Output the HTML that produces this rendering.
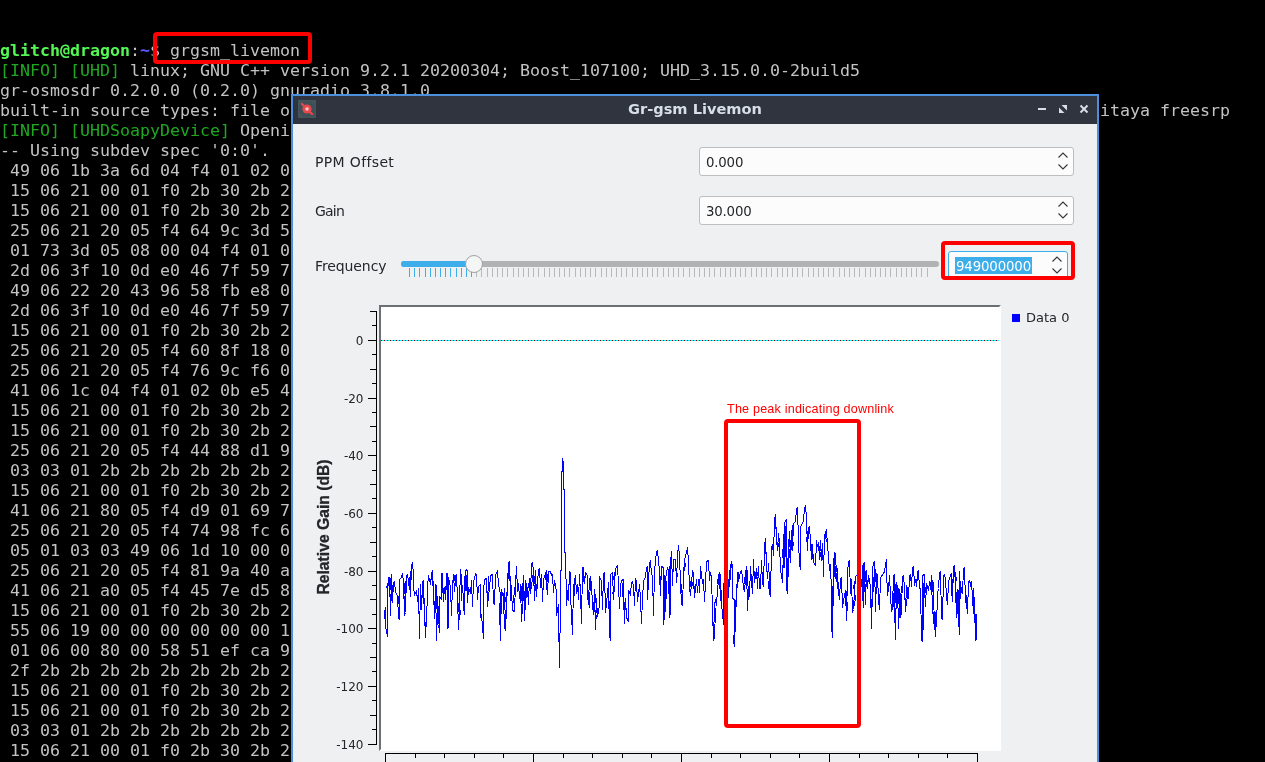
<!DOCTYPE html>
<html><head><meta charset="utf-8"><title>Gr-gsm Livemon</title>
<style>
html,body{margin:0;padding:0;background:#000;}
body{width:1265px;height:762px;overflow:hidden;position:relative;font-family:"DejaVu Sans","Liberation Sans",sans-serif;}
#term{will-change:transform;position:absolute;left:0;top:41px;width:1265px;color:#c3c3c3;font-family:"DejaVu Sans Mono","Liberation Mono",monospace;font-size:16.61px;line-height:20px;white-space:pre;}
.ln{height:20px;overflow:hidden}
.g{color:#1fa81f}
.pg{color:#54f754;font-weight:bold}
.pb{color:#5c5cff;font-weight:bold}
.redbox{position:absolute;border:4px solid #ff0000;border-radius:4px;box-sizing:border-box}
#win{position:absolute;left:291px;top:94px;width:808px;height:680px;box-sizing:border-box;border:2px solid #4e8fdc;background:#eff0f1;}
#tb{position:absolute;left:0;top:0;width:804px;height:28px;background:#2f343f;}
#tb .title{position:absolute;left:0;right:0;top:-1px;height:27px;line-height:27px;text-align:center;color:#d8dee8;font-weight:bold;font-size:14.6px;font-family:"DejaVu Sans","Liberation Sans",sans-serif;}
#ico{position:absolute;left:5px;top:4px;width:18px;height:18px}
.lbl{position:absolute;left:22px;color:#232629;font-size:14px;line-height:20px;font-family:"DejaVu Sans","Liberation Sans",sans-serif;}
.spin{position:absolute;box-sizing:border-box;border:1px solid #bcbebf;border-radius:3px;background:#fcfcfc;color:#232629;font-size:13.33px;}
.spin span{position:absolute;left:6px;top:1px;line-height:27px;letter-spacing:-0.2px}
#groove{position:absolute;left:108px;top:165px;width:538px;height:6px;border-radius:3px;background:#b1b2b3}
#fill{position:absolute;left:108px;top:165px;width:74px;height:6px;border-radius:3px;background:#3daee9}
#handle{position:absolute;left:172px;top:159px;width:18px;height:18px;box-sizing:border-box;border:1px solid #9fa1a3;border-radius:50%;background:#f4f5f5}
#ticks i{position:absolute;top:172px;width:1px;height:9px;display:block}
.tl{font-family:"DejaVu Sans","Liberation Sans",sans-serif;font-size:12px;fill:#232629}
#plot{position:absolute;left:0;top:0;width:1265px;height:762px;}
#canvas{position:absolute;left:379px;top:305px;width:622px;height:446px;background:#fff;box-sizing:border-box;border-top:2px solid #6c7075;border-left:2px solid #6c7075;border-right:2px solid #fff;border-bottom:2px solid #fff;}
#ytitle{position:absolute;left:324px;top:527px;width:0;height:0;}
#ytitle span{position:absolute;white-space:nowrap;transform:translate(-50%,-50%) rotate(-90deg);font-family:"Liberation Sans",sans-serif;font-weight:bold;font-size:15.7px;color:#232629;-webkit-text-stroke:0.3px #232629;}
#legend{position:absolute;left:1012px;top:314px;width:8px;height:8px;background:#0000ff}
#legtxt{position:absolute;left:1026px;top:308px;font-size:13px;line-height:20px;color:#232629;}
#anno{position:absolute;left:727px;top:402px;font-family:"Liberation Sans",sans-serif;font-size:12.6px;letter-spacing:0.19px;line-height:14px;color:#ff0000;white-space:nowrap}
</style></head><body>
<div id="root" style="position:absolute;left:0;top:0;width:1265px;height:762px;will-change:transform">
<div id="term"><div class="ln"><span class="pg">glitch@dragon</span>:<span class="pb">~</span>$ grgsm_livemon</div><div class="ln"><span class="g">[INFO] [UHD]</span> linux; GNU C++ version 9.2.1 20200304; Boost_107100; UHD_3.15.0.0-2build5</div><div class="ln">gr-osmosdr 0.2.0.0 (0.2.0) gnuradio 3.8.1.0</div><div class="ln">built-in source types: file osmosdr fcd rtl rtl_tcp uhd miri hackrf bladerf rfspace airspy airspyhf soapy redpitaya freesrp</div><div class="ln"><span class="g">[INFO] [UHDSoapyDevice]</span> Opening device</div><div class="ln">-- Using subdev spec '0:0'.</div><div class="ln"> 49 06 1b 3a 6d 04 f4 01 02 0b 2b 2b 2b</div><div class="ln"> 15 06 21 00 01 f0 2b 30 2b 2b 2b 2b 2b</div><div class="ln"> 15 06 21 00 01 f0 2b 30 2b 2b 2b 2b 2b</div><div class="ln"> 25 06 21 20 05 f4 64 9c 3d 5b 2b 2b 2b</div><div class="ln"> 01 73 3d 05 08 00 04 f4 01 0b 2b 2b 2b</div><div class="ln"> 2d 06 3f 10 0d e0 46 7f 59 7b 2b 2b 2b</div><div class="ln"> 49 06 22 20 43 96 58 fb e8 0b 2b 2b 2b</div><div class="ln"> 2d 06 3f 10 0d e0 46 7f 59 7b 2b 2b 2b</div><div class="ln"> 15 06 21 00 01 f0 2b 30 2b 2b 2b 2b 2b</div><div class="ln"> 25 06 21 20 05 f4 60 8f 18 0b 2b 2b 2b</div><div class="ln"> 25 06 21 20 05 f4 76 9c f6 0b 2b 2b 2b</div><div class="ln"> 41 06 1c 04 f4 01 02 0b e5 4b 2b 2b 2b</div><div class="ln"> 15 06 21 00 01 f0 2b 30 2b 2b 2b 2b 2b</div><div class="ln"> 15 06 21 00 01 f0 2b 30 2b 2b 2b 2b 2b</div><div class="ln"> 25 06 21 20 05 f4 44 88 d1 9b 2b 2b 2b</div><div class="ln"> 03 03 01 2b 2b 2b 2b 2b 2b 2b 2b 2b 2b</div><div class="ln"> 15 06 21 00 01 f0 2b 30 2b 2b 2b 2b 2b</div><div class="ln"> 41 06 21 80 05 f4 d9 01 69 7b 2b 2b 2b</div><div class="ln"> 25 06 21 20 05 f4 74 98 fc 6b 2b 2b 2b</div><div class="ln"> 05 01 03 03 49 06 1d 10 00 0b 2b 2b 2b</div><div class="ln"> 25 06 21 20 05 f4 81 9a 40 ab 2b 2b 2b</div><div class="ln"> 41 06 21 a0 05 f4 45 7e d5 8b 2b 2b 2b</div><div class="ln"> 15 06 21 00 01 f0 2b 30 2b 2b 2b 2b 2b</div><div class="ln"> 55 06 19 00 00 00 00 00 00 1b 2b 2b 2b</div><div class="ln"> 01 06 00 80 00 58 51 ef ca 9b 2b 2b 2b</div><div class="ln"> 2f 2b 2b 2b 2b 2b 2b 2b 2b 2b 2b 2b 2b</div><div class="ln"> 15 06 21 00 01 f0 2b 30 2b 2b 2b 2b 2b</div><div class="ln"> 15 06 21 00 01 f0 2b 30 2b 2b 2b 2b 2b</div><div class="ln"> 03 03 01 2b 2b 2b 2b 2b 2b 2b 2b 2b 2b</div><div class="ln"> 15 06 21 00 01 f0 2b 30 2b 2b 2b 2b 2b</div></div>
<div class="redbox" style="left:153px;top:32px;width:159px;height:32px"></div>

<div id="win">
 <div id="tb">
  <svg id="ico" viewBox="0 0 18 18"><rect width="18" height="18" fill="#44545c"/><circle cx="9" cy="9" r="8" fill="#3e4f56"/><path d="M4 4 L14 14" stroke="#e8484c" stroke-width="2.3" stroke-linecap="round"/><circle cx="9" cy="9" r="4.6" fill="#e8484c"/><circle cx="9" cy="9" r="1.8" fill="#f7c9cc"/></svg>
  <div class="title">Gr-gsm Livemon</div>
  <svg style="position:absolute;left:738px;top:6px" width="60" height="16" viewBox="1031 102 60 16">
   <rect x="1038" y="108" width="8" height="2" fill="#d8dee8"/>
   <path d="M1061.5 105 H1067 V110.5 Z M1059 107.5 V113 H1064.5 Z" fill="#d8dee8"/>
   <path d="M1080.5 105.5 L1087.5 112.5 M1087.5 105.5 L1080.5 112.5" stroke="#d8dee8" stroke-width="2" fill="none"/>
  </svg>
 </div>
 <div class="lbl" style="top:56px;letter-spacing:0.35px">PPM Offset</div>
 <div class="lbl" style="top:105px;letter-spacing:-0.8px">Gain</div>
 <div class="lbl" style="top:160px;letter-spacing:-0.1px">Frequency</div>
 <div class="spin" style="left:406px;top:51px;width:375px;height:29px"><span>0.000</span>
  <svg style="position:absolute;right:4px;top:4px" width="12" height="20" viewBox="1057 152 12 20"><path d="M1058.5 157.5 L1063 153 L1067.5 157.5 M1058.5 164.5 L1063 169 L1067.5 164.5" fill="none" stroke="#31363b" stroke-width="1.1"/></svg>
 </div>
 <div class="spin" style="left:406px;top:100px;width:375px;height:29px"><span>30.000</span>
  <svg style="position:absolute;right:4px;top:4px" width="12" height="20" viewBox="1057 152 12 20"><path d="M1058.5 157.5 L1063 153 L1067.5 157.5 M1058.5 164.5 L1063 169 L1067.5 164.5" fill="none" stroke="#31363b" stroke-width="1.1"/></svg>
 </div>
 <div id="groove"></div><div id="fill"></div>
 <div id="ticks"><i style="left:116px;background:#3daee9"></i><i style="left:121px;background:#3daee9"></i><i style="left:126px;background:#3daee9"></i><i style="left:132px;background:#3daee9"></i><i style="left:137px;background:#3daee9"></i><i style="left:142px;background:#3daee9"></i><i style="left:147px;background:#3daee9"></i><i style="left:152px;background:#3daee9"></i><i style="left:157px;background:#3daee9"></i><i style="left:163px;background:#3daee9"></i><i style="left:168px;background:#3daee9"></i><i style="left:173px;background:#3daee9"></i><i style="left:178px;background:#3daee9"></i><i style="left:183px;background:#b7b8b9"></i><i style="left:188px;background:#b7b8b9"></i><i style="left:194px;background:#b7b8b9"></i><i style="left:199px;background:#b7b8b9"></i><i style="left:204px;background:#b7b8b9"></i><i style="left:209px;background:#b7b8b9"></i><i style="left:214px;background:#b7b8b9"></i><i style="left:220px;background:#b7b8b9"></i><i style="left:225px;background:#b7b8b9"></i><i style="left:230px;background:#b7b8b9"></i><i style="left:235px;background:#b7b8b9"></i><i style="left:240px;background:#b7b8b9"></i><i style="left:245px;background:#b7b8b9"></i><i style="left:251px;background:#b7b8b9"></i><i style="left:256px;background:#b7b8b9"></i><i style="left:261px;background:#b7b8b9"></i><i style="left:266px;background:#b7b8b9"></i><i style="left:271px;background:#b7b8b9"></i><i style="left:276px;background:#b7b8b9"></i><i style="left:282px;background:#b7b8b9"></i><i style="left:287px;background:#b7b8b9"></i><i style="left:292px;background:#b7b8b9"></i><i style="left:297px;background:#b7b8b9"></i><i style="left:302px;background:#b7b8b9"></i><i style="left:308px;background:#b7b8b9"></i><i style="left:313px;background:#b7b8b9"></i><i style="left:318px;background:#b7b8b9"></i><i style="left:323px;background:#b7b8b9"></i><i style="left:328px;background:#b7b8b9"></i><i style="left:333px;background:#b7b8b9"></i><i style="left:339px;background:#b7b8b9"></i><i style="left:344px;background:#b7b8b9"></i><i style="left:349px;background:#b7b8b9"></i><i style="left:354px;background:#b7b8b9"></i><i style="left:359px;background:#b7b8b9"></i><i style="left:364px;background:#b7b8b9"></i><i style="left:370px;background:#b7b8b9"></i><i style="left:375px;background:#b7b8b9"></i><i style="left:380px;background:#b7b8b9"></i><i style="left:385px;background:#b7b8b9"></i><i style="left:390px;background:#b7b8b9"></i><i style="left:396px;background:#b7b8b9"></i><i style="left:401px;background:#b7b8b9"></i><i style="left:406px;background:#b7b8b9"></i><i style="left:411px;background:#b7b8b9"></i><i style="left:416px;background:#b7b8b9"></i><i style="left:421px;background:#b7b8b9"></i><i style="left:427px;background:#b7b8b9"></i><i style="left:432px;background:#b7b8b9"></i><i style="left:437px;background:#b7b8b9"></i><i style="left:442px;background:#b7b8b9"></i><i style="left:447px;background:#b7b8b9"></i><i style="left:452px;background:#b7b8b9"></i><i style="left:458px;background:#b7b8b9"></i><i style="left:463px;background:#b7b8b9"></i><i style="left:468px;background:#b7b8b9"></i><i style="left:473px;background:#b7b8b9"></i><i style="left:478px;background:#b7b8b9"></i><i style="left:484px;background:#b7b8b9"></i><i style="left:489px;background:#b7b8b9"></i><i style="left:494px;background:#b7b8b9"></i><i style="left:499px;background:#b7b8b9"></i><i style="left:504px;background:#b7b8b9"></i><i style="left:509px;background:#b7b8b9"></i><i style="left:515px;background:#b7b8b9"></i><i style="left:520px;background:#b7b8b9"></i><i style="left:525px;background:#b7b8b9"></i><i style="left:530px;background:#b7b8b9"></i><i style="left:535px;background:#b7b8b9"></i><i style="left:540px;background:#b7b8b9"></i><i style="left:546px;background:#b7b8b9"></i><i style="left:551px;background:#b7b8b9"></i><i style="left:556px;background:#b7b8b9"></i><i style="left:561px;background:#b7b8b9"></i><i style="left:566px;background:#b7b8b9"></i><i style="left:572px;background:#b7b8b9"></i><i style="left:577px;background:#b7b8b9"></i><i style="left:582px;background:#b7b8b9"></i><i style="left:587px;background:#b7b8b9"></i><i style="left:592px;background:#b7b8b9"></i><i style="left:597px;background:#b7b8b9"></i><i style="left:603px;background:#b7b8b9"></i><i style="left:608px;background:#b7b8b9"></i><i style="left:613px;background:#b7b8b9"></i><i style="left:618px;background:#b7b8b9"></i><i style="left:623px;background:#b7b8b9"></i><i style="left:628px;background:#b7b8b9"></i><i style="left:634px;background:#b7b8b9"></i></div>
 <div id="handle"></div>
 <div class="spin" style="left:655px;top:155px;width:120px;height:29px;border-color:#3daee9"><span style="left:6px;top:5px;height:17px;line-height:19px;background:#3daee9;color:#fff;padding:0 1px;letter-spacing:-0.15px">949000000</span>
  <svg style="position:absolute;right:4px;top:4px" width="12" height="20" viewBox="1057 152 12 20"><path d="M1058.5 157.5 L1063 153 L1067.5 157.5 M1058.5 164.5 L1063 169 L1067.5 164.5" fill="none" stroke="#31363b" stroke-width="1.1"/></svg>
 </div>
</div>
<div class="redbox" style="left:941px;top:241px;width:134px;height:39px"></div>

<div id="canvas"></div>
<div style="position:absolute;left:381px;top:340px;width:618px;height:1px;background:repeating-linear-gradient(90deg,#800000 0,#800000 1px,#00ffff 1px,#00ffff 3px)"></div>
<svg id="plot" viewBox="0 0 1265 762">
<path d="M376.5 311 V745" stroke="#000" stroke-width="1" fill="none"/>
<path d="M370 311.5 H377" stroke="#000" stroke-width="1"/>
<path d="M372 325.5 H377" stroke="#000" stroke-width="1"/>
<path d="M368 340.5 H377" stroke="#000" stroke-width="1"/>
<text x="363.5" y="345.0" text-anchor="end" class="tl">0</text>
<path d="M372 354.5 H377" stroke="#000" stroke-width="1"/>
<path d="M370 369.5 H377" stroke="#000" stroke-width="1"/>
<path d="M372 383.5 H377" stroke="#000" stroke-width="1"/>
<path d="M368 398.5 H377" stroke="#000" stroke-width="1"/>
<text x="363.5" y="403.0" text-anchor="end" class="tl">-20</text>
<path d="M372 412.5 H377" stroke="#000" stroke-width="1"/>
<path d="M370 426.5 H377" stroke="#000" stroke-width="1"/>
<path d="M372 441.5 H377" stroke="#000" stroke-width="1"/>
<path d="M368 455.5 H377" stroke="#000" stroke-width="1"/>
<text x="363.5" y="460.0" text-anchor="end" class="tl">-40</text>
<path d="M372 470.5 H377" stroke="#000" stroke-width="1"/>
<path d="M370 484.5 H377" stroke="#000" stroke-width="1"/>
<path d="M372 498.5 H377" stroke="#000" stroke-width="1"/>
<path d="M368 513.5 H377" stroke="#000" stroke-width="1"/>
<text x="363.5" y="518.0" text-anchor="end" class="tl">-60</text>
<path d="M372 527.5 H377" stroke="#000" stroke-width="1"/>
<path d="M370 542.5 H377" stroke="#000" stroke-width="1"/>
<path d="M372 556.5 H377" stroke="#000" stroke-width="1"/>
<path d="M368 571.5 H377" stroke="#000" stroke-width="1"/>
<text x="363.5" y="576.0" text-anchor="end" class="tl">-80</text>
<path d="M372 585.5 H377" stroke="#000" stroke-width="1"/>
<path d="M370 599.5 H377" stroke="#000" stroke-width="1"/>
<path d="M372 614.5 H377" stroke="#000" stroke-width="1"/>
<path d="M368 628.5 H377" stroke="#000" stroke-width="1"/>
<text x="363.5" y="633.0" text-anchor="end" class="tl">-100</text>
<path d="M372 643.5 H377" stroke="#000" stroke-width="1"/>
<path d="M370 657.5 H377" stroke="#000" stroke-width="1"/>
<path d="M372 671.5 H377" stroke="#000" stroke-width="1"/>
<path d="M368 686.5 H377" stroke="#000" stroke-width="1"/>
<text x="363.5" y="691.0" text-anchor="end" class="tl">-120</text>
<path d="M372 700.5 H377" stroke="#000" stroke-width="1"/>
<path d="M370 715.5 H377" stroke="#000" stroke-width="1"/>
<path d="M372 729.5 H377" stroke="#000" stroke-width="1"/>
<path d="M368 744.5 H377" stroke="#000" stroke-width="1"/>
<text x="363.5" y="749.0" text-anchor="end" class="tl">-140</text>
<path d="M385 753.5 H978" stroke="#000" stroke-width="1" fill="none"/>
<path d="M385.5 753 V762" stroke="#000" stroke-width="1"/>
<path d="M415.5 753 V758" stroke="#000" stroke-width="1"/>
<path d="M444.5 753 V758" stroke="#000" stroke-width="1"/>
<path d="M474.5 753 V758" stroke="#000" stroke-width="1"/>
<path d="M503.5 753 V758" stroke="#000" stroke-width="1"/>
<path d="M533.5 753 V762" stroke="#000" stroke-width="1"/>
<path d="M563.5 753 V758" stroke="#000" stroke-width="1"/>
<path d="M592.5 753 V758" stroke="#000" stroke-width="1"/>
<path d="M622.5 753 V758" stroke="#000" stroke-width="1"/>
<path d="M651.5 753 V758" stroke="#000" stroke-width="1"/>
<path d="M681.5 753 V762" stroke="#000" stroke-width="1"/>
<path d="M711.5 753 V758" stroke="#000" stroke-width="1"/>
<path d="M740.5 753 V758" stroke="#000" stroke-width="1"/>
<path d="M770.5 753 V758" stroke="#000" stroke-width="1"/>
<path d="M799.5 753 V758" stroke="#000" stroke-width="1"/>
<path d="M829.5 753 V762" stroke="#000" stroke-width="1"/>
<path d="M859.5 753 V758" stroke="#000" stroke-width="1"/>
<path d="M888.5 753 V758" stroke="#000" stroke-width="1"/>
<path d="M918.5 753 V758" stroke="#000" stroke-width="1"/>
<path d="M947.5 753 V758" stroke="#000" stroke-width="1"/>
<path d="M977.5 753 V762" stroke="#000" stroke-width="1"/>
<polyline points="385.5,606.5 385.5,626.5 387.5,636.5 387.5,595.5 388.5,577.5 389.5,577.5 390.5,615.5 391.5,574.5 392.5,602.5 393.5,582.5 394.5,581.5 395.5,591.5 397.5,596.5 398.5,617.5 399.5,619.5 399.5,579.5 401.5,577.5 402.5,573.5 403.5,581.5 404.5,615.5 405.5,612.5 406.5,575.5 407.5,574.5 408.5,580.5 409.5,577.5 410.5,596.5 411.5,565.5 412.5,563.5 413.5,573.5 413.5,585.5 414.5,595.5 416.5,590.5 417.5,601.5 418.5,588.5 419.5,638.5 420.5,584.5 421.5,609.5 422.5,581.5 423.5,580.5 424.5,614.5 425.5,637.5 426.5,606.5 426.5,626.5 427.5,587.5 428.5,575.5 430.5,584.5 431.5,573.5 432.5,571.5 433.5,590.5 434.5,618.5 435.5,584.5 436.5,640.5 437.5,596.5 438.5,615.5 439.5,632.5 439.5,596.5 441.5,599.5 441.5,573.5 442.5,573.5 443.5,601.5 444.5,587.5 445.5,599.5 446.5,573.5 447.5,573.5 447.5,628.5 448.5,626.5 448.5,577.5 450.5,587.5 451.5,615.5 452.5,585.5 453.5,574.5 454.5,591.5 455.5,575.5 456.5,574.5 457.5,598.5 458.5,629.5 459.5,602.5 460.5,569.5 461.5,577.5 461.5,600.5 462.5,585.5 464.5,614.5 465.5,570.5 466.5,569.5 467.5,571.5 467.5,602.5 468.5,587.5 470.5,593.5 471.5,580.5 472.5,606.5 473.5,582.5 475.5,573.5 476.5,574.5 477.5,599.5 478.5,586.5 480.5,584.5 480.5,617.5 481.5,615.5 483.5,638.5 483.5,591.5 484.5,579.5 486.5,578.5 487.5,606.5 488.5,576.5 489.5,589.5 490.5,575.5 492.5,574.5 493.5,603.5 494.5,604.5 495.5,574.5 496.5,573.5 497.5,571.5 498.5,584.5 500.5,594.5 500.5,640.5 501.5,589.5 503.5,598.5 504.5,588.5 505.5,630.5 506.5,608.5 507.5,584.5 508.5,562.5 509.5,561.5 510.5,600.5 511.5,591.5 512.5,610.5 514.5,611.5 515.5,584.5 516.5,566.5 517.5,591.5 518.5,583.5 519.5,598.5 520.5,584.5 521.5,621.5 522.5,591.5 523.5,575.5 524.5,620.5 525.5,580.5 527.5,589.5 528.5,604.5 529.5,578.5 530.5,593.5 531.5,563.5 532.5,562.5 533.5,571.5 534.5,600.5 535.5,570.5 536.5,596.5 538.5,569.5 539.5,568.5 540.5,587.5 541.5,574.5 542.5,601.5 543.5,579.5 544.5,576.5 546.5,570.5 547.5,594.5 548.5,571.5 550.5,571.5 551.5,575.5 552.5,574.5 553.5,592.5 554.5,580.5 556.5,591.5 556.5,615.5 558.5,604.5 558.5,615.5 559.5,667.5 560.5,600.5 560.5,570.5 561.5,570.5 561.5,471.5 562.5,471.5 562.5,458.5 563.5,463.5 563.5,489.5 564.5,489.5 564.5,552.5 565.5,552.5 565.5,571.5 566.5,585.5 566.5,605.5 568.5,584.5 568.5,600.5 569.5,571.5 570.5,573.5 570.5,594.5 572.5,634.5 573.5,584.5 574.5,595.5 575.5,575.5 576.5,593.5 577.5,584.5 578.5,599.5 579.5,574.5 580.5,593.5 581.5,623.5 582.5,568.5 583.5,567.5 584.5,583.5 585.5,572.5 587.5,575.5 587.5,597.5 589.5,607.5 590.5,576.5 591.5,584.5 592.5,605.5 593.5,614.5 594.5,589.5 595.5,629.5 596.5,598.5 597.5,616.5 599.5,605.5 599.5,576.5 601.5,581.5 602.5,609.5 603.5,573.5 604.5,572.5 605.5,612.5 607.5,593.5 608.5,582.5 609.5,635.5 610.5,640.5 610.5,574.5 612.5,572.5 613.5,599.5 614.5,584.5 615.5,568.5 617.5,565.5 618.5,584.5 619.5,608.5 620.5,586.5 621.5,580.5 623.5,579.5 624.5,623.5 625.5,598.5 626.5,617.5 628.5,621.5 628.5,590.5 630.5,594.5 631.5,582.5 632.5,581.5 633.5,586.5 634.5,605.5 635.5,578.5 636.5,581.5 637.5,601.5 639.5,584.5 640.5,599.5 641.5,623.5 642.5,598.5 643.5,581.5 645.5,576.5 646.5,567.5 647.5,566.5 647.5,599.5 649.5,563.5 650.5,561.5 651.5,573.5 652.5,576.5 653.5,615.5 654.5,571.5 656.5,551.5 657.5,550.5 658.5,560.5 659.5,571.5 660.5,595.5 661.5,566.5 663.5,567.5 663.5,624.5 665.5,607.5 665.5,579.5 667.5,567.5 668.5,570.5 669.5,617.5 670.5,579.5 671.5,551.5 672.5,585.5 673.5,559.5 675.5,559.5 676.5,582.5 677.5,555.5 678.5,545.5 679.5,555.5 680.5,584.5 681.5,603.5 682.5,605.5 683.5,574.5 684.5,559.5 685.5,556.5 687.5,547.5 688.5,561.5 689.5,588.5 690.5,595.5 692.5,571.5 693.5,573.5 694.5,597.5 696.5,579.5 697.5,592.5 698.5,579.5 699.5,592.5 700.5,566.5 702.5,582.5 703.5,580.5 704.5,601.5 705.5,582.5 706.5,561.5 708.5,560.5 709.5,580.5 710.5,572.5 711.5,576.5 712.5,611.5 713.5,640.5 714.5,604.5 715.5,599.5 716.5,605.5 717.5,588.5 719.5,573.5 720.5,575.5 721.5,603.5 723.5,624.5 723.5,583.5 725.5,615.5 727.5,617.5 728.5,579.5 729.5,586.5 731.5,561.5 732.5,566.5 732.5,598.5 734.5,599.5 734.5,646.5 735.5,618.5 736.5,595.5 737.5,572.5 738.5,581.5 740.5,571.5 741.5,570.5 742.5,576.5 743.5,588.5 744.5,591.5 746.5,566.5 747.5,610.5 748.5,588.5 749.5,596.5 750.5,566.5 751.5,581.5 752.5,593.5 753.5,559.5 754.5,582.5 756.5,568.5 757.5,588.5 758.5,566.5 759.5,588.5 760.5,588.5 761.5,560.5 762.5,582.5 763.5,586.5 764.5,546.5 765.5,538.5 766.5,564.5 767.5,578.5 768.5,563.5 769.5,580.5 770.5,596.5 771.5,547.5 772.5,544.5 773.5,555.5 774.5,519.5 775.5,514.5 776.5,538.5 777.5,550.5 778.5,533.5 779.5,544.5 780.5,569.5 782.5,582.5 783.5,549.5 784.5,567.5 784.5,522.5 786.5,519.5 787.5,593.5 788.5,561.5 789.5,531.5 790.5,562.5 791.5,530.5 792.5,550.5 793.5,523.5 795.5,521.5 796.5,508.5 797.5,507.5 798.5,540.5 799.5,564.5 800.5,569.5 800.5,526.5 802.5,523.5 803.5,520.5 804.5,508.5 805.5,505.5 806.5,517.5 807.5,550.5 808.5,527.5 809.5,526.5 810.5,541.5 811.5,559.5 812.5,544.5 813.5,562.5 815.5,565.5 816.5,540.5 817.5,546.5 818.5,542.5 819.5,559.5 820.5,540.5 821.5,560.5 822.5,543.5 823.5,576.5 824.5,535.5 826.5,529.5 827.5,545.5 828.5,556.5 829.5,570.5 830.5,564.5 831.5,592.5 832.5,637.5 833.5,578.5 834.5,552.5 835.5,578.5 836.5,565.5 837.5,570.5 838.5,592.5 839.5,599.5 840.5,578.5 841.5,577.5 842.5,607.5 843.5,600.5 845.5,590.5 846.5,620.5 847.5,573.5 848.5,561.5 849.5,560.5 850.5,593.5 851.5,579.5 852.5,612.5 853.5,609.5 854.5,591.5 855.5,576.5 855.5,576.5 856.5,575.5 857.5,575.5 861.5,579.5 863.5,607.5 863.5,563.5 864.5,562.5 865.5,604.5 866.5,570.5 867.5,588.5 868.5,575.5 870.5,586.5 871.5,628.5 872.5,570.5 873.5,562.5 874.5,561.5 875.5,611.5 876.5,573.5 877.5,575.5 878.5,599.5 879.5,609.5 880.5,578.5 881.5,575.5 883.5,574.5 884.5,570.5 886.5,559.5 886.5,570.5 887.5,595.5 888.5,588.5 889.5,575.5 890.5,596.5 891.5,611.5 892.5,607.5 893.5,575.5 894.5,574.5 895.5,639.5 896.5,582.5 897.5,587.5 898.5,628.5 899.5,589.5 900.5,617.5 901.5,611.5 902.5,576.5 903.5,575.5 904.5,588.5 905.5,611.5 906.5,585.5 907.5,588.5 908.5,598.5 909.5,575.5 910.5,574.5 911.5,586.5 912.5,567.5 913.5,566.5 914.5,585.5 915.5,579.5 916.5,586.5 917.5,571.5 918.5,570.5 919.5,588.5 920.5,588.5 921.5,639.5 922.5,641.5 922.5,575.5 924.5,574.5 924.5,582.5 925.5,606.5 926.5,583.5 928.5,590.5 929.5,581.5 930.5,589.5 931.5,575.5 932.5,613.5 933.5,582.5 933.5,601.5 935.5,636.5 936.5,611.5 936.5,626.5 937.5,594.5 938.5,588.5 939.5,572.5 940.5,571.5 941.5,618.5 942.5,619.5 943.5,575.5 944.5,574.5 945.5,578.5 946.5,596.5 947.5,604.5 948.5,581.5 950.5,575.5 951.5,573.5 952.5,601.5 953.5,566.5 954.5,565.5 955.5,588.5 956.5,617.5 957.5,589.5 958.5,618.5 959.5,634.5 959.5,571.5 960.5,598.5 961.5,588.5 962.5,593.5 963.5,568.5 964.5,567.5 965.5,601.5 966.5,595.5 967.5,613.5 968.5,581.5 969.5,580.5 971.5,588.5 971.5,581.5 973.5,613.5 973.5,588.5 974.5,605.5 975.5,640.5 976.5,639.5 976.5,613.5" fill="none" stroke="#0000ff" stroke-width="1" stroke-linejoin="miter" shape-rendering="crispEdges"/>
<path d="M384.5 609.5 L384.5 618.5 M386.5 588.5 L387.5 583.5 M390.5 578.5 L391.5 601.5 M391.5 597.5 L392.5 585.5 M398.5 596.5 L399.5 610.5 M404.5 583.5 L405.5 603.5 M404.5 610.5 L405.5 581.5 M408.5 581.5 L409.5 589.5 M409.5 590.5 L410.5 571.5 M422.5 590.5 L423.5 604.5 M431.5 572.5 L432.5 586.5 M435.5 612.5 L436.5 585.5 M436.5 592.5 L437.5 625.5 M437.5 621.5 L438.5 628.5 M442.5 592.5 L442.5 573.5 M446.5 590.5 L447.5 580.5 M454.5 575.5 L455.5 586.5 M458.5 603.5 L459.5 620.5 M459.5 620.5 L460.5 610.5 M463.5 611.5 L464.5 576.5 M466.5 574.5 L466.5 590.5 M488.5 601.5 L489.5 583.5 M499.5 602.5 L499.5 624.5 M503.5 597.5 L504.5 629.5 M505.5 602.5 L506.5 592.5 M508.5 579.5 L509.5 567.5 M510.5 576.5 L511.5 592.5 M513.5 603.5 L514.5 587.5 M521.5 586.5 L522.5 614.5 M522.5 609.5 L523.5 593.5 M524.5 591.5 L525.5 608.5 M525.5 610.5 L526.5 586.5 M528.5 583.5 L529.5 591.5 M531.5 589.5 L532.5 575.5 M534.5 576.5 L535.5 591.5 M545.5 572.5 L546.5 586.5 M546.5 590.5 L547.5 574.5 M573.5 595.5 L574.5 578.5 M582.5 567.5 L583.5 582.5 M588.5 602.5 L589.5 578.5 M594.5 612.5 L595.5 594.5 M596.5 619.5 L597.5 610.5 M609.5 626.5 L609.5 600.5 M612.5 594.5 L613.5 589.5 M613.5 580.5 L614.5 572.5 M622.5 583.5 L623.5 610.5 M659.5 585.5 L660.5 576.5 M664.5 574.5 L664.5 617.5 M666.5 598.5 L666.5 580.5 M669.5 573.5 L670.5 615.5 M669.5 575.5 L670.5 557.5 M676.5 568.5 L677.5 577.5 M681.5 584.5 L682.5 600.5 M684.5 571.5 L685.5 563.5 M690.5 586.5 L690.5 580.5 M692.5 582.5 L693.5 589.5 M714.5 639.5 L715.5 608.5 M717.5 584.5 L718.5 574.5 M719.5 576.5 L720.5 601.5 M728.5 586.5 L730.5 564.5 M733.5 644.5 L734.5 626.5 M734.5 615.5 L735.5 600.5 M737.5 588.5 L738.5 572.5 M744.5 584.5 L745.5 570.5 M747.5 570.5 L748.5 600.5 M756.5 579.5 L757.5 572.5 M764.5 547.5 L765.5 554.5 M768.5 581.5 L769.5 595.5 M774.5 521.5 L775.5 529.5 M778.5 547.5 L779.5 538.5 M782.5 549.5 L783.5 566.5 M783.5 567.5 L783.5 533.5 M785.5 526.5 L786.5 586.5 M786.5 591.5 L787.5 566.5 M789.5 557.5 L790.5 540.5 M788.5 539.5 L789.5 558.5 M792.5 536.5 L793.5 546.5 M791.5 550.5 L792.5 525.5 M806.5 542.5 L807.5 531.5 M811.5 544.5 L812.5 559.5 M819.5 546.5 L820.5 556.5 M820.5 557.5 L821.5 549.5 M825.5 534.5 L826.5 542.5 M831.5 632.5 L832.5 586.5 M834.5 577.5 L835.5 553.5 M833.5 558.5 L834.5 574.5 M836.5 573.5 L837.5 589.5 M846.5 591.5 L847.5 611.5 M854.5 606.5 L855.5 595.5 M853.5 589.5 L854.5 581.5 M862.5 593.5 L862.5 564.5 M864.5 592.5 L865.5 571.5 M865.5 571.5 L866.5 585.5 M872.5 607.5 L873.5 577.5 M875.5 569.5 L876.5 594.5 M893.5 607.5 L894.5 578.5 M894.5 623.5 L895.5 584.5 M898.5 588.5 L899.5 618.5 M900.5 597.5 L901.5 615.5 M900.5 599.5 L901.5 586.5 M906.5 606.5 L907.5 592.5 M917.5 581.5 L918.5 571.5 M923.5 629.5 L923.5 582.5 M924.5 598.5 L925.5 587.5 M932.5 580.5 L933.5 602.5 M932.5 605.5 L934.5 630.5 M935.5 611.5 L935.5 623.5 M951.5 596.5 L952.5 579.5 M955.5 572.5 L956.5 581.5 M956.5 592.5 L957.5 614.5 M957.5 613.5 L958.5 600.5 M958.5 590.5 L959.5 612.5 M960.5 581.5 L961.5 591.5 M965.5 596.5 L966.5 609.5 M975.5 619.5 L976.5 629.5 M975.5 637.5 L975.5 613.5" fill="none" stroke="#0000ff" stroke-width="1" shape-rendering="crispEdges"/>
</svg>
<div id="ytitle"><span>Relative Gain (dB)</span></div>
<div id="legend"></div><div id="legtxt">Data 0</div>
<div id="anno">The peak indicating downlink</div>
<div class="redbox" style="left:724px;top:419px;width:137px;height:309px"></div>
</div>
</body></html>
